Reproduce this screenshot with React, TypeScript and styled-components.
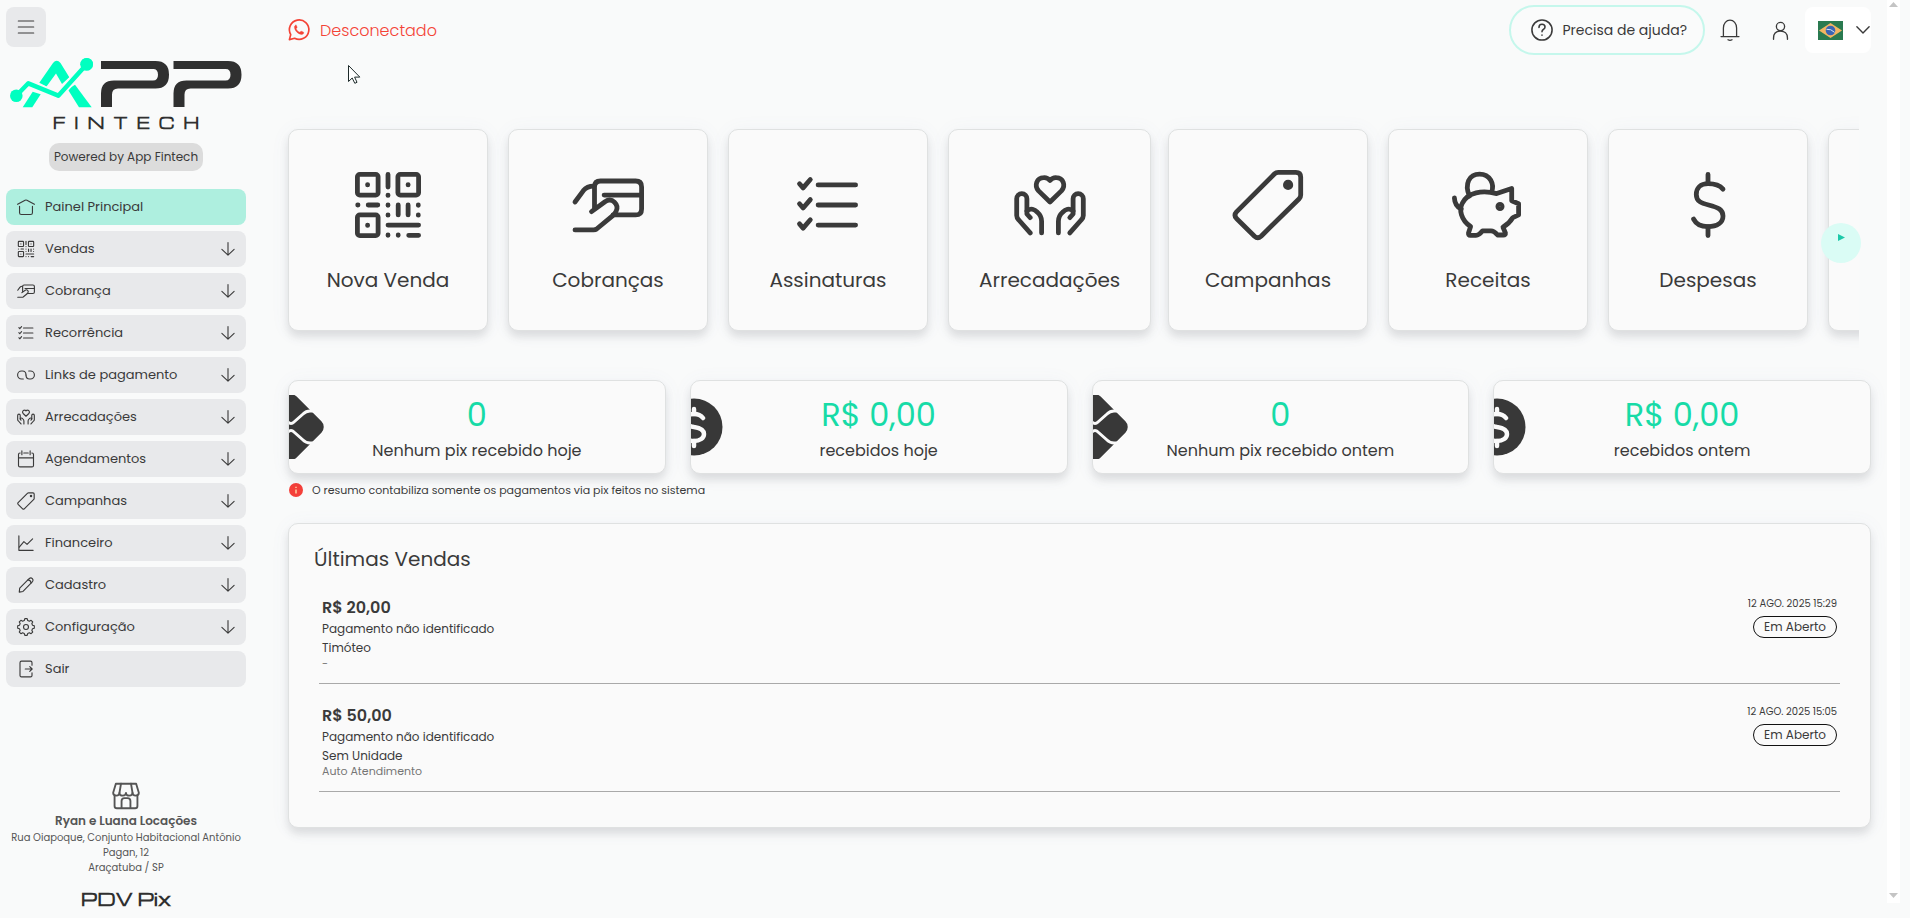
import React from "react";
import styled, { createGlobalStyle } from "styled-components";

const GlobalStyle = createGlobalStyle`
  *, *::before, *::after { box-sizing: border-box; }
  body {
    margin: 0;
    background: #f9fafa;
    color: #3a3a3a;
    font-family: Poppins, Inter, "Open Sans", sans-serif;
  }
  button { font: inherit; color: inherit; cursor: pointer; }
  a { color: inherit; text-decoration: none; }
  ul { list-style: none; margin: 0; padding: 0; }
  h2, p { margin: 0; font-weight: 400; }
`;

/* ---------- icons ---------- */

const Icon = styled.svg<{ $size: number; $weight?: number }>`
  display: block;
  flex: none;
  width: ${(p) => p.$size}px;
  height: ${(p) => p.$size}px;
  fill: none;
  stroke: currentColor;
  stroke-width: ${(p) => p.$weight ?? 1.6};
  stroke-linecap: round;
  stroke-linejoin: round;
  overflow: visible;
`;

type Glyph =
  | "home" | "qr" | "cardHand" | "checklist" | "link" | "hands" | "calendar" | "tag"
  | "chart" | "pencil" | "gear" | "exit" | "piggy" | "dollar" | "arrowDown" | "menu"
  | "bell" | "user" | "chevron" | "help" | "store" | "whatsapp";

const hand = (
  <>
    <path d="M5.4 21.3 1.6 17Q.9 16.3.9 15.5V9.9a1.7 1.7 0 0 1 3.4 0V15l1.1 1.2" />
    <path d="M4.3 14c1.2-1.2 2.6-.5 3.5.4 1 .9 1.4 1.8 1.4 3v3.9" />
  </>
);

const gearPath = (() => {
  const pts: string[] = [];
  for (let i = 0; i < 8; i++) {
    const base = (i * Math.PI) / 4 - Math.PI / 2;
    [[-0.26, 9], [-0.14, 11.2], [0.14, 11.2], [0.26, 9]].forEach(([a, r]) => {
      pts.push(`${(12 + r * Math.cos(base + a)).toFixed(2)} ${(12 + r * Math.sin(base + a)).toFixed(2)}`);
    });
  }
  return `M${pts.join("L")}Z`;
})();

const glyphs: Record<Glyph, React.ReactNode> = {
  home: <><path d="M.8 8.4 10.8 3Q12 2.4 13.2 3l10 5.4" /><path d="M3.4 11v8.6q0 2.4 2.4 2.4h12.4q2.4 0 2.4-2.4V11" /></>,
  qr: (
    <>
      <rect x="1.8" y="1.8" width="6.9" height="6.9" rx=".8" />
      <rect x="15.3" y="1.8" width="6.9" height="6.9" rx=".8" />
      <rect x="1.8" y="15.3" width="6.9" height="6.9" rx=".8" />
      <path d="M5.2 5.2v.1M18.7 5.2v.1M5.2 18.7v.1M12 1.8V6M12 8.7v.1M1.9 12H2M5.4 12h3.2M12 12v.1M12 15.3v.1M15.4 12v3.3M18.7 12v3.3M22.1 12v.1M22.1 15.3v.1M12 18.7h10.2M12 22v.1M15.4 22v.1M18.9 22.1h3.3" />
    </>
  ),
  cardHand: (
    <>
      <path d="M1 11l2.8-3.8Q5 5.7 7.2 5.7" />
      <path d="M7.5 13V6q0-2 2-2h11.7q2 0 2 2v7.3q0 2-2 2h-7.5" />
      <path d="M10.7 8.7h12.5" />
      <path d="M6.5 14.2l4.5-3.3c2.4-1.6 4.8 1 3.7 3.2-.3.6-.6 1-1.2 1.5l-5.3 4.4q-.4.3-1 .3H1" />
    </>
  ),
  checklist: (
    <>
      <path d="M2.5 4.9l1.2 1.4 2.4-2.8M2.5 11.6l1.2 1.4 2.4-2.8M2.5 18.3l1.2 1.4 2.4-2.8" />
      <path d="M8.7 5.3h12.5M8.7 12h12.5M8.7 18.7h12.5" />
    </>
  ),
  link: (
    <>
      <path d="M8.4 17.4H6.2a5.4 5.4 0 0 1 0-10.8h1c3.800 0 4.800 2.400 4.800 5.400" />
      <path d="M15.600 6.600h2.200a5.400 5.400 0 0 1 0 10.800h-1c-3.800 0-4.800-2.400-4.800-5.400" />
    </>
  ),
  hands: (
    <>
      <path d="M12 11 8.200 7.300C6.600 5.500 7.600 3 9.900 2.900q1.200-.1 2.100.9.900-1 2.100-.9c2.300.1 3.300 2.600 1.700 4.400z" />
      {hand}
      <g transform="translate(24 0) scale(-1 1)">{hand}</g>
    </>
  ),
  calendar: <><path d="M4.200 4H4q-2 0-2 2v14.500q0 2 2 2h16q2 0 2-2V6q0-2-2-2h-.2M9 4h6" /><path d="M2 10.500h20M6.500 1.200v5M17.500 1.200v5" /></>,
  tag: (
    <>
      <path d="M15.400 1.100h5.900q1.600 0 1.600 1.600v6q0 .7-.5 1.200L9.700 22.400q-1.100 1-2.200 0l-6-5.900q-1-1.100 0-2.200L14.200 1.600q.5-.5 1.200-.5z" />
      <circle cx="18.700" cy="5.300" r=".9" fill="currentColor" />
    </>
  ),
  chart: <><path d="M2.500 2.500v19.300h19" /><path d="M3 17.500l6.200-7.300 4.200 3.600 7.400-7.300" /></>,
  pencil: <><path d="M3 21.500l.6-5.300L16.500 3.300q2-1.600 4 .3 1.800 2 .2 4L8 20.600z" /><path d="M14.600 5.200q3.600 0 4.200 4.200" /></>,
  gear: <><path d={gearPath} /><circle cx="12" cy="12" r="3.300" /></>,
  exit: <><path d="M20 7V3.500Q20 1.500 18 1.500H6q-2 0-2 2v17q0 2 2 2h12q2 0 2-2V17" /><path d="M11 12h9M17 8.800l3.200 3.200-3.200 3.200" /></>,
  piggy: (
    <>
      <path d="M5.800 9C4.100 5 5.700 1.700 9.200 1.700S14.200 5 13.200 7.700M.8 9.600q.1 2.600 2.300 3.800" />
      <path d="M14.900 8.200l5-1.700v4.100l2.300 1v3.700l-1.900.9q-1.200 2-3.300 3.200l.8 1.900q.1.700-.7.700h-1.900Q14 20.600 13 20.600h-2.800Q9 22.100 8 22.100H6.100q-.7 0-.6-.8l.7-2.100C3 17 2.200 13.500 3.500 11.300 5.300 7.800 10 6.900 14.900 8.200z" />
      <circle cx="16" cy="12.500" r=".7" />
    </>
  ),
  dollar: (
    <>
      <path d="M17 6.700C15.900 5.400 14 4.900 12 4.900c-2.500 0-3.900 1.500-3.900 3.600 0 2.300 1.700 2.900 4.100 3.500 3.200.8 4.800 1.600 4.800 3.700 0 2.200-2 3.500-5 3.500-2.400 0-4-.9-4.800-2.500" />
      <path d="M12 1.800v3.100M12 19.200v3" />
    </>
  ),
  arrowDown: <path d="M12 1v21M1.500 12.500 12 22.500 22.500 12.500" />,
  menu: <path d="M.5 3h23M.5 12h23M.5 21h23" />,
  bell: <><path d="M2.200 19.200h19.600M4.800 19V9.800C4.800 4.800 8 1.200 12 1.200s7.200 3.600 7.200 8.600V19" /><path d="M9.800 22.600q2.200 1.300 4.400 0" /></>,
  user: <><circle cx="12" cy="7" r="5.200" /><path d="M3.200 23v-1.500C3.200 15.400 7 12.800 12 12.800s8.800 2.600 8.800 8.700V23" /></>,
  chevron: <path d="M1.500 6.500 12 17 22.500 6.500" />,
  help: <><circle cx="12" cy="12" r="11" /><path d="M8.700 9.200q0-3.400 3.300-3.400t3.300 3q0 1.700-1.900 2.700-1.400.8-1.400 2.400M12 17.500v.2" /></>,
  store: (
    <>
      <path d="M3.300 1.500h17.400L23 9.300q0 2.400-2.700 2.400-2.700 0-2.700-2.400 0 2.400-2.800 2.400T12 9.300q0 2.400-2.800 2.400T6.400 9.300q0 2.400-2.700 2.400T1 9.300z" />
      <path d="M7.700 1.500 6.400 9.300M16.300 1.500l1.300 7.800M2.200 11.400v9.100q0 2 2 2h15.600q2 0 2-2v-9.100M8.200 22.500v-6.200q0-2.500 2.500-2.500h2.600q2.500 0 2.500 2.500v6.200" />
    </>
  ),
  whatsapp: (
    <>
      <path d="M1.500 22.500 3 17A10.600 10.600 0 1 1 7.200 21z" />
      <path d="M8.500 6.700c-1 .3-1.600 1.200-1.500 2.300.5 4.200 3.600 7.200 7.800 7.900 1.100.1 2.100-.5 2.400-1.500.1-.6 0-.8-.5-1.100l-2-.9c-.4-.2-.6-.1-.9.200l-.8.900c-2-.8-3.300-2.100-4.100-4l.8-.9c.2-.3.3-.6.200-.9l-.8-1.700c-.1-.3-.3-.4-.6-.3z" fill="currentColor" strokeWidth=".4" />
    </>
  ),
};

const G = ({ name, size, weight }: { name: Glyph; size: number; weight?: number }) => (
  <Icon viewBox="0 0 24 24" $size={size} $weight={weight} aria-hidden="true">
    {glyphs[name]}
  </Icon>
);

/* ---------- page frame ---------- */

const Page = styled.div`
  display: flex;
  align-items: stretch;
  min-height: 100vh;
`;

const Sidebar = styled.aside`
  display: flex;
  flex-direction: column;
  flex: 0 0 252px;
  padding: 7px 6px 8px;
`;

const MenuButton = styled.button`
  display: grid;
  place-items: center;
  width: 40px;
  height: 40px;
  border: 0;
  border-radius: 8px;
  padding: 0;
  background: #e8e9eb;
`;

const Brand = styled.div`
  display: flex;
  flex-direction: column;
  align-items: center;
  margin-top: 10px;
`;

const BrandMark = styled.svg`
  display: block;
  width: 236px;
  height: 54px;
`;

const BrandName = styled.span`
  font-family: Michroma, "DejaVu Sans", sans-serif;
  font-size: 15px;
  line-height: 16px;
  font-weight: 700;
  letter-spacing: 9px;
  padding-left: 9px;
  margin-top: 4px;
  color: #303030;
`;

const Powered = styled.span`
  height: 28px;
  margin-top: 12px;
  padding: 0 5px;
  border-radius: 10px;
  background: #dcdcdc;
  font-size: 12px;
  line-height: 28px;
  white-space: nowrap;
`;

const Nav = styled.ul`
  display: flex;
  flex-direction: column;
  gap: 6px;
  margin-top: 18px;
`;

const NavLink = styled.a<{ $active?: boolean }>`
  display: flex;
  align-items: center;
  gap: 10px;
  height: 36px;
  padding: 0 11px;
  border-radius: 8px;
  background: ${(p) => (p.$active ? "#aeefdf" : "#e8e9eb")};
  font-size: 13px;
`;

const NavLabel = styled.span`
  flex: 1;
`;

const Company = styled.footer`
  display: flex;
  flex-direction: column;
  align-items: center;
  margin-top: auto;
  color: #555;
  font-size: 10px;
  line-height: 15px;
  text-align: center;
`;

const CompanyName = styled.strong`
  margin-top: 2px;
  font-size: 12px;
  line-height: 18px;
  font-weight: 600;
`;

const Product = styled.span`
  margin-top: 13px;
  font-family: Michroma, "DejaVu Sans", sans-serif;
  font-size: 17px;
  line-height: 22px;
  font-weight: 700;
  color: #303030;
`;

const Main = styled.main`
  flex: 1;
  min-width: 0;
  padding: 5px 16px 24px 36px;
`;

const Track = styled.div`
  display: flex;
  flex-direction: column;
  justify-content: space-between;
  align-items: center;
  flex: 0 0 13px;
  margin: 0 10px 15px 0;
  padding: 2px 0 5px;
  background: #fff;
`;

const TrackArrow = styled.svg`
  display: block;
  width: 9px;
  height: 5px;
  fill: #c4c4c4;
`;

/* ---------- top bar ---------- */

const TopBar = styled.header`
  display: flex;
  align-items: center;
  height: 50px;
`;

const Status = styled.a`
  display: flex;
  align-items: center;
  gap: 10px;
  margin-right: auto;
  color: #f44336;
  font-size: 16px;
  font-weight: 300;
`;

const HelpButton = styled.button`
  display: flex;
  align-items: center;
  gap: 9px;
  height: 50px;
  padding: 0 16px 0 20px;
  border: 2px solid #c5f7ec;
  border-radius: 25px;
  background: #fafbfb;
  font-size: 14px;
`;

const IconButton = styled.button`
  display: grid;
  place-items: center;
  width: 50px;
  height: 40px;
  border: 0;
  padding: 0;
  background: none;
`;

const LanguageButton = styled.button`
  display: flex;
  align-items: center;
  gap: 13px;
  height: 46px;
  padding: 0 1px 0 13px;
  border: 0;
  border-radius: 8px;
  background: #fff;
`;

const Flag = styled.svg`
  display: block;
  width: 25px;
  height: 19px;
`;

const Pointer = styled.svg`
  position: absolute;
  left: 348px;
  top: 65px;
  width: 13px;
  height: 19px;
  pointer-events: none;
`;

/* ---------- cards ---------- */

const Card = styled.div`
  border: 1px solid #dfe1e1;
  border-radius: 10px;
  background: #fafafa;
  box-shadow: 0 6px 8px rgba(0, 0, 0, 0.1), 0 2px 20px rgba(100, 120, 180, 0.06);
`;

const Carousel = styled.section`
  position: relative;
  margin: 42px 12px 0 -16px;
`;

const Slides = styled.ul`
  display: flex;
  overflow: hidden;
  padding: 32px 0 31px 16px;
`;

const Slide = styled.li`
  flex: 0 0 220px;
`;

const Shortcut = styled(Card).attrs({ as: "a", href: "#" })`
  display: inline-flex;
  flex-direction: column;
  align-items: center;
  justify-content: center;
  gap: 24px;
  min-width: 200px;
  height: 202px;
  padding: 3px 30px 0;
  vertical-align: top;
  font-size: 20px;
  line-height: 30px;
`;

const NextButton = styled.button`
  position: absolute;
  right: -2px;
  top: 50%;
  width: 40px;
  height: 40px;
  border: 0;
  border-radius: 50%;
  padding: 0 0 11px;
  margin-top: -7px;
  background: #dafcf5;
  color: #1dc9a9;
  display: grid;
  place-items: center;
`;

const Stats = styled.section`
  display: grid;
  grid-template-columns: repeat(4, 1fr);
  gap: 24px;
  margin-top: 18px;
`;

const Stat = styled(Card)`
  position: relative;
  overflow: hidden;
  display: flex;
  flex-direction: column;
  align-items: center;
  height: 94px;
  padding-top: 10px;
`;

const StatBadge = styled.svg`
  position: absolute;
  left: -31px;
  top: 14px;
  width: 66px;
  height: 64px;
`;

const StatValue = styled.span`
  color: #17dba7;
  font-size: 32px;
  line-height: 48px;
`;

const StatLabel = styled.span`
  font-size: 16px;
  line-height: 24px;
`;

const Notice = styled.p`
  display: flex;
  align-items: center;
  gap: 9px;
  margin-top: 7px;
  padding-left: 1px;
  font-size: 11px;
  line-height: 18px;
`;

const InfoDot = styled.svg`
  width: 14px;
  height: 14px;
`;

const SalesPanel = styled(Card).attrs({ as: "section" })`
  margin-top: 24px;
  padding: 20px 30px 35px;
`;

const PanelTitle = styled.h2`
  margin: 0 0 2px -5px;
  font-size: 20px;
  line-height: 30px;
`;

const Sale = styled.li`
  display: flex;
  justify-content: space-between;
  height: 108px;
  padding: 20px 3px 0;
  border-bottom: 1px solid #a9a9a9;
`;

const SaleInfo = styled.div`
  display: flex;
  flex-direction: column;
  padding-top: 1px;
  font-size: 12px;
  line-height: 19px;
`;

const Amount = styled.strong`
  font-size: 16px;
  line-height: 22px;
  font-weight: 600;
`;

const Origin = styled.span`
  font-size: 11px;
  line-height: 13px;
  color: #757575;
`;

const SaleMeta = styled.div`
  display: flex;
  flex-direction: column;
  align-items: flex-end;
  gap: 4px;
`;

const SaleDate = styled.time`
  font-size: 10px;
  line-height: 16px;
`;

const Tag = styled.span`
  height: 22px;
  padding: 0 10px;
  border: 1px solid #111;
  border-radius: 11px;
  font-size: 12px;
  line-height: 20px;
`;

/* ---------- data ---------- */

const navItems: { label: string; icon: Glyph; expandable?: boolean; active?: boolean }[] = [
  { label: "Painel Principal", icon: "home", active: true },
  { label: "Vendas", icon: "qr", expandable: true },
  { label: "Cobrança", icon: "cardHand", expandable: true },
  { label: "Recorrência", icon: "checklist", expandable: true },
  { label: "Links de pagamento", icon: "link", expandable: true },
  { label: "Arrecadações", icon: "hands", expandable: true },
  { label: "Agendamentos", icon: "calendar", expandable: true },
  { label: "Campanhas", icon: "tag", expandable: true },
  { label: "Financeiro", icon: "chart", expandable: true },
  { label: "Cadastro", icon: "pencil", expandable: true },
  { label: "Configuração", icon: "gear", expandable: true },
  { label: "Sair", icon: "exit" },
];

const shortcuts: { label: string; icon?: Glyph }[] = [
  { label: "Nova Venda", icon: "qr" },
  { label: "Cobranças", icon: "cardHand" },
  { label: "Assinaturas", icon: "checklist" },
  { label: "Arrecadações", icon: "hands" },
  { label: "Campanhas", icon: "tag" },
  { label: "Receitas", icon: "piggy" },
  { label: "Despesas", icon: "dollar" },
  { label: "" },
];

const stats = [
  { value: "0", label: "Nenhum pix recebido hoje", kind: "pix" },
  { value: "R$ 0,00", label: "recebidos hoje", kind: "money" },
  { value: "0", label: "Nenhum pix recebido ontem", kind: "pix" },
  { value: "R$ 0,00", label: "recebidos ontem", kind: "money" },
];

const sales = [
  { amount: "R$ 20,00", payer: "Pagamento não identificado", unit: "Timóteo", origin: "-", date: "12 AGO. 2025 15:29", status: "Em Aberto" },
  { amount: "R$ 50,00", payer: "Pagamento não identificado", unit: "Sem Unidade", origin: "Auto Atendimento", date: "12 AGO. 2025 15:05", status: "Em Aberto" },
];

/* ---------- drawings ---------- */

const ribbon = "M93 4h54.500Q161 4 161 17.700T147.500 31.500H110q-6 0-6 6V50H93V36.500q0-13 13-13h39q5 0 5-5.800T145 12H93z";

const Logo = () => (
  <BrandMark viewBox="0 0 236 54" role="img" aria-label="APP">
    <g fill="#00ffc0">
      <path d="M31.300 25.700 45 6q3.700-4.500 7.500 0l8.800 14.300L54 27l-6-10.500-9.500 13z" />
      <path d="M24.700 34.700l8 2.600-8.400 13h-9.600z" />
      <path d="M59.700 32.300l7.300-4.600 16.700 22.600H71z" />
      <circle cx="8.300" cy="38.700" r="6.300" />
      <circle cx="78.700" cy="7.300" r="6.300" />
    </g>
    <path d="M8.300 38.700l12-12.400 30 12.400L78.700 7.300" fill="none" stroke="#f9fafa" strokeWidth="8" strokeDasharray="0 24 60 100" />
    <path d="M8.300 38.700l12-12.400 30 12.400L78.700 7.300" fill="none" stroke="#00ffc0" strokeWidth="4.500" strokeLinejoin="round" />
    <circle cx="78.700" cy="7.300" r="6.300" fill="#00ffc0" />
    <g fill="#303030">
      <path d={ribbon} />
      <path d={ribbon} transform="translate(72.500 0)" />
    </g>
  </BrandMark>
);

const PixBadge = () => (
  <StatBadge viewBox="0 0 66 64" aria-hidden="true">
    <rect x="7.500" y="6.500" width="51" height="51" rx="8" transform="rotate(45 33 32)" fill="#383838" />
    <g fill="none" stroke="#fafafa" strokeWidth="3">
      <path d="M4 16h10q4 0 7 3l9 8q3 3 6 0l9-8q3-3 7-3h10" />
      <path d="M4 48h10q4 0 7-3l9-8q3-3 6 0l9 8q3 3 7 3h10" />
    </g>
  </StatBadge>
);

const MoneyBadge = () => (
  <StatBadge viewBox="0 0 66 64" aria-hidden="true">
    <circle cx="34" cy="32" r="28.500" fill="#383838" />
    <g fill="none" stroke="#fafafa" strokeWidth="4.500" strokeLinecap="round">
      <path d="M43 23q-3-4-9-4c-6 0-9 2-9 6 0 5 4 6 9 7 6 1 10 3 10 7s-4 7-10 7q-7 0-10-4" />
      <path d="M34 14v5M34 46v5" />
    </g>
  </StatBadge>
);

export default function App() {
  return (
    <>
      <GlobalStyle />
      <Page>
        <Sidebar>
          <MenuButton aria-label="Menu"><G name="menu" size={16} weight={1.800} /></MenuButton>
          <Brand>
            <Logo />
            <BrandName>FINTECH</BrandName>
            <Powered>Powered by App Fintech</Powered>
          </Brand>
          <nav>
            <Nav>
              {navItems.map((item) => (
                <li key={item.label}>
                  <NavLink href="#" $active={item.active}>
                    <G name={item.icon} size={18} weight={1.500} />
                    <NavLabel>{item.label}</NavLabel>
                    {item.expandable && <G name="arrowDown" size={14} weight={1.900} />}
                  </NavLink>
                </li>
              ))}
            </Nav>
          </nav>
          <Company>
            <G name="store" size={28} />
            <CompanyName>Ryan e Luana Locações</CompanyName>
            <span>Rua Oiapoque, Conjunto Habitacional Antônio Pagan, 12</span>
            <span>Araçatuba / SP</span>
            <Product>PDV Pix</Product>
          </Company>
        </Sidebar>

        <Main>
          <TopBar>
            <Status href="#"><G name="whatsapp" size={22} weight={1.800} />Desconectado</Status>
            <HelpButton><G name="help" size={22} weight={1.700} />Precisa de ajuda?</HelpButton>
            <IconButton aria-label="Notificações"><G name="bell" size={22} weight={1.400} /></IconButton>
            <IconButton aria-label="Perfil"><G name="user" size={19} weight={1.700} /></IconButton>
            <LanguageButton aria-label="Idioma">
              <Flag viewBox="0 0 25 19" aria-hidden="true">
                <rect width="25" height="19" fill="#2a7a50" />
                <path d="M12.500 2 24 9.500 12.500 17 1 9.500z" fill="#f3b562" />
                <circle cx="12.500" cy="9.500" r="4.800" fill="#3c64b4" />
                <path d="M8.500 8.300q4.500-.6 8 3" fill="none" stroke="#d6e4f2" />
              </Flag>
              <G name="chevron" size={14} weight={2.400} />
            </LanguageButton>
          </TopBar>

          <Carousel>
            <Slides>
              {shortcuts.map((s, i) => (
                <Slide key={i}>
                  <Shortcut>
                    {s.icon && <G name={s.icon} size={72} />}
                    {s.label && <span>{s.label}</span>}
                  </Shortcut>
                </Slide>
              ))}
            </Slides>
            <NextButton aria-label="Próximo">
              <svg width="7" height="7" viewBox="0 0 7 7" fill="currentColor"><path d="M0 0 7 3.500 0 7z" /></svg>
            </NextButton>
          </Carousel>

          <Stats>
            {stats.map((s) => (
              <Stat key={s.label}>
                {s.kind === "pix" ? <PixBadge /> : <MoneyBadge />}
                <StatValue>{s.value}</StatValue>
                <StatLabel>{s.label}</StatLabel>
              </Stat>
            ))}
          </Stats>
          <Notice>
            <InfoDot viewBox="0 0 14 14" aria-hidden="true">
              <circle cx="7" cy="7" r="7" fill="#f4403a" />
              <path d="M7 6.500v4M7 3.800v1.200" stroke="#ffd9a8" strokeWidth="1.400" />
            </InfoDot>
            O resumo contabiliza somente os pagamentos via pix feitos no sistema
          </Notice>

          <SalesPanel>
            <PanelTitle>Últimas Vendas</PanelTitle>
            <ul>
              {sales.map((s) => (
                <Sale key={s.date}>
                  <SaleInfo>
                    <Amount>{s.amount}</Amount>
                    <span>{s.payer}</span>
                    <span>{s.unit}</span>
                    <Origin>{s.origin}</Origin>
                  </SaleInfo>
                  <SaleMeta>
                    <SaleDate>{s.date}</SaleDate>
                    <Tag>{s.status}</Tag>
                  </SaleMeta>
                </Sale>
              ))}
            </ul>
          </SalesPanel>
        </Main>

        <Track aria-hidden="true">
          <TrackArrow viewBox="0 0 9 5"><path d="M0 5 4.500 0 9 5z" /></TrackArrow>
          <TrackArrow viewBox="0 0 9 5"><path d="M0 0h9L4.500 5z" /></TrackArrow>
        </Track>
      </Page>
      <Pointer viewBox="0 0 13 19" aria-hidden="true">
        <path d="M.5.500v16l3.700-3.500 2.600 5.300 2.200-1-2.400-5.200h5.200z" fill="#fff" stroke="#1d2a2a" />
      </Pointer>
    </>
  );
}
